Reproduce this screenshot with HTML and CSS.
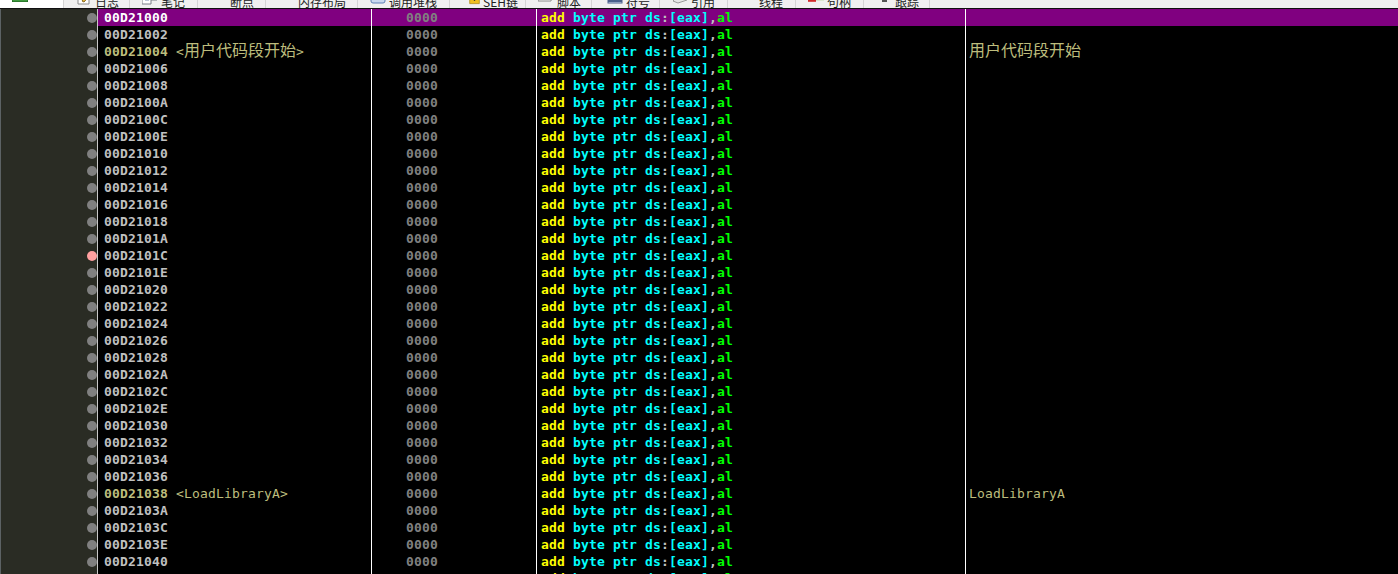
FILE: index.html
```html
<!DOCTYPE html>
<html lang="zh">
<head>
<meta charset="utf-8">
<title>x64dbg</title>
<link rel="stylesheet" href="styles.css">
</head>
<body>
<div class="tabs">
<div class="tab active w63"><svg class="ic low" viewBox="0 0 16 16"><rect x="0" y="0" width="16" height="16" fill="#3f9a3f" stroke="#1d5c1d"/></svg></div>
<div class="tab w66"><svg class="ic" viewBox="0 0 16 16"><path d="M2 0h11v15H2z" fill="#fff" stroke="#8a8a8a"/><path d="M6 12l7-9 2 2-7 8z" fill="#e8b93c" stroke="#8a6a20"/></svg><span>日志</span></div>
<div class="tab w68"><svg class="ic" viewBox="0 0 16 16"><path d="M0 0h15v11H9v4H0z" fill="#fff" stroke="#7a7f88"/><path d="M3 8h9M3 11h4" stroke="#7a8fb0"/></svg><span>笔记</span></div>
<div class="tab w68 center"><span>断点</span></div>
<div class="tab w92 center"><span>内存布局</span></div>
<div class="tab w92"><svg class="ic" viewBox="0 0 16 16"><rect x="1" y="0" width="14" height="14" rx="2" fill="#c9d8f0" stroke="#5d7fb5"/></svg><span>调用堆栈</span></div>
<div class="tab w76"><svg class="ic small" viewBox="0 0 16 16"><path d="M1 0h14v14H1z" fill="#f0c020" stroke="#a88510"/><path d="M8 5v5" stroke="#333" stroke-width="2"/></svg><span>SEH链</span></div>
<div class="tab w66"><svg class="ic" viewBox="0 0 16 16"><path d="M3 0h12l-2 12H0z" fill="#fff" stroke="#8a8a8a"/></svg><span>脚本</span></div>
<div class="tab w68 sym"><svg class="ic" viewBox="0 0 16 16"><rect x="1" y="0" width="14" height="14" fill="#cfdcf0" stroke="#4a5f8a"/><path d="M1 12h14" stroke="#4a5f8a" stroke-width="2"/></svg><span>符号</span></div>
<div class="tab w68"><svg class="ic" viewBox="0 0 16 16"><path d="M1 12l4-4h10v3l-9 3z" fill="#e8e8e8" stroke="#9a9a9a"/></svg><span>引用</span></div>
<div class="tab w68"><svg class="ic" viewBox="0 0 16 16"><path d="M3 0h10v10H3z" fill="#9fb6d6"/><path d="M5 3h6" stroke="#3c5f90"/></svg><span>线程</span></div>
<div class="tab w68"><svg class="ic wide" viewBox="0 0 20 16"><rect x="0" y="3" width="10" height="11" fill="#d02a2a"/><rect x="10" y="1" width="10" height="11" fill="#7ab648"/></svg><span>句柄</span></div>
<div class="tab w66"><svg class="ic" viewBox="0 0 16 16"><path d="M6 0h3v8h2v5H6z" fill="#555"/></svg><span>跟踪</span></div>
</div>
<div class="list">
<div class="row sel"><div class="gut"><i class="dot"></i></div><div class="addr"><b>00D21000</b></div><div class="bytes">0000</div><div class="dis"><em>add</em> <u>byte</u> <u>ptr</u> <u>ds</u><s>:</s><u>[eax]</u><s>,</s><q>al</q></div><div class="cmt"></div></div>
<div class="row"><div class="gut"><i class="dot"></i></div><div class="addr"><b>00D21002</b></div><div class="bytes">0000</div><div class="dis"><em>add</em> <u>byte</u> <u>ptr</u> <u>ds</u><s>:</s><u>[eax]</u><s>,</s><q>al</q></div><div class="cmt"></div></div>
<div class="row lab"><div class="gut"><i class="dot"></i></div><div class="addr"><b>00D21004</b> <span class="tag">&lt;<span class="cjk">用户代码段开始</span>&gt;</span></div><div class="bytes">0000</div><div class="dis"><em>add</em> <u>byte</u> <u>ptr</u> <u>ds</u><s>:</s><u>[eax]</u><s>,</s><q>al</q></div><div class="cmt"><span class="cjk">用户代码段开始</span></div></div>
<div class="row"><div class="gut"><i class="dot"></i></div><div class="addr"><b>00D21006</b></div><div class="bytes">0000</div><div class="dis"><em>add</em> <u>byte</u> <u>ptr</u> <u>ds</u><s>:</s><u>[eax]</u><s>,</s><q>al</q></div><div class="cmt"></div></div>
<div class="row"><div class="gut"><i class="dot"></i></div><div class="addr"><b>00D21008</b></div><div class="bytes">0000</div><div class="dis"><em>add</em> <u>byte</u> <u>ptr</u> <u>ds</u><s>:</s><u>[eax]</u><s>,</s><q>al</q></div><div class="cmt"></div></div>
<div class="row"><div class="gut"><i class="dot"></i></div><div class="addr"><b>00D2100A</b></div><div class="bytes">0000</div><div class="dis"><em>add</em> <u>byte</u> <u>ptr</u> <u>ds</u><s>:</s><u>[eax]</u><s>,</s><q>al</q></div><div class="cmt"></div></div>
<div class="row"><div class="gut"><i class="dot"></i></div><div class="addr"><b>00D2100C</b></div><div class="bytes">0000</div><div class="dis"><em>add</em> <u>byte</u> <u>ptr</u> <u>ds</u><s>:</s><u>[eax]</u><s>,</s><q>al</q></div><div class="cmt"></div></div>
<div class="row"><div class="gut"><i class="dot"></i></div><div class="addr"><b>00D2100E</b></div><div class="bytes">0000</div><div class="dis"><em>add</em> <u>byte</u> <u>ptr</u> <u>ds</u><s>:</s><u>[eax]</u><s>,</s><q>al</q></div><div class="cmt"></div></div>
<div class="row"><div class="gut"><i class="dot"></i></div><div class="addr"><b>00D21010</b></div><div class="bytes">0000</div><div class="dis"><em>add</em> <u>byte</u> <u>ptr</u> <u>ds</u><s>:</s><u>[eax]</u><s>,</s><q>al</q></div><div class="cmt"></div></div>
<div class="row"><div class="gut"><i class="dot"></i></div><div class="addr"><b>00D21012</b></div><div class="bytes">0000</div><div class="dis"><em>add</em> <u>byte</u> <u>ptr</u> <u>ds</u><s>:</s><u>[eax]</u><s>,</s><q>al</q></div><div class="cmt"></div></div>
<div class="row"><div class="gut"><i class="dot"></i></div><div class="addr"><b>00D21014</b></div><div class="bytes">0000</div><div class="dis"><em>add</em> <u>byte</u> <u>ptr</u> <u>ds</u><s>:</s><u>[eax]</u><s>,</s><q>al</q></div><div class="cmt"></div></div>
<div class="row"><div class="gut"><i class="dot"></i></div><div class="addr"><b>00D21016</b></div><div class="bytes">0000</div><div class="dis"><em>add</em> <u>byte</u> <u>ptr</u> <u>ds</u><s>:</s><u>[eax]</u><s>,</s><q>al</q></div><div class="cmt"></div></div>
<div class="row"><div class="gut"><i class="dot"></i></div><div class="addr"><b>00D21018</b></div><div class="bytes">0000</div><div class="dis"><em>add</em> <u>byte</u> <u>ptr</u> <u>ds</u><s>:</s><u>[eax]</u><s>,</s><q>al</q></div><div class="cmt"></div></div>
<div class="row"><div class="gut"><i class="dot"></i></div><div class="addr"><b>00D2101A</b></div><div class="bytes">0000</div><div class="dis"><em>add</em> <u>byte</u> <u>ptr</u> <u>ds</u><s>:</s><u>[eax]</u><s>,</s><q>al</q></div><div class="cmt"></div></div>
<div class="row"><div class="gut"><i class="dot bp"></i></div><div class="addr"><b>00D2101C</b></div><div class="bytes">0000</div><div class="dis"><em>add</em> <u>byte</u> <u>ptr</u> <u>ds</u><s>:</s><u>[eax]</u><s>,</s><q>al</q></div><div class="cmt"></div></div>
<div class="row"><div class="gut"><i class="dot"></i></div><div class="addr"><b>00D2101E</b></div><div class="bytes">0000</div><div class="dis"><em>add</em> <u>byte</u> <u>ptr</u> <u>ds</u><s>:</s><u>[eax]</u><s>,</s><q>al</q></div><div class="cmt"></div></div>
<div class="row"><div class="gut"><i class="dot"></i></div><div class="addr"><b>00D21020</b></div><div class="bytes">0000</div><div class="dis"><em>add</em> <u>byte</u> <u>ptr</u> <u>ds</u><s>:</s><u>[eax]</u><s>,</s><q>al</q></div><div class="cmt"></div></div>
<div class="row"><div class="gut"><i class="dot"></i></div><div class="addr"><b>00D21022</b></div><div class="bytes">0000</div><div class="dis"><em>add</em> <u>byte</u> <u>ptr</u> <u>ds</u><s>:</s><u>[eax]</u><s>,</s><q>al</q></div><div class="cmt"></div></div>
<div class="row"><div class="gut"><i class="dot"></i></div><div class="addr"><b>00D21024</b></div><div class="bytes">0000</div><div class="dis"><em>add</em> <u>byte</u> <u>ptr</u> <u>ds</u><s>:</s><u>[eax]</u><s>,</s><q>al</q></div><div class="cmt"></div></div>
<div class="row"><div class="gut"><i class="dot"></i></div><div class="addr"><b>00D21026</b></div><div class="bytes">0000</div><div class="dis"><em>add</em> <u>byte</u> <u>ptr</u> <u>ds</u><s>:</s><u>[eax]</u><s>,</s><q>al</q></div><div class="cmt"></div></div>
<div class="row"><div class="gut"><i class="dot"></i></div><div class="addr"><b>00D21028</b></div><div class="bytes">0000</div><div class="dis"><em>add</em> <u>byte</u> <u>ptr</u> <u>ds</u><s>:</s><u>[eax]</u><s>,</s><q>al</q></div><div class="cmt"></div></div>
<div class="row"><div class="gut"><i class="dot"></i></div><div class="addr"><b>00D2102A</b></div><div class="bytes">0000</div><div class="dis"><em>add</em> <u>byte</u> <u>ptr</u> <u>ds</u><s>:</s><u>[eax]</u><s>,</s><q>al</q></div><div class="cmt"></div></div>
<div class="row"><div class="gut"><i class="dot"></i></div><div class="addr"><b>00D2102C</b></div><div class="bytes">0000</div><div class="dis"><em>add</em> <u>byte</u> <u>ptr</u> <u>ds</u><s>:</s><u>[eax]</u><s>,</s><q>al</q></div><div class="cmt"></div></div>
<div class="row"><div class="gut"><i class="dot"></i></div><div class="addr"><b>00D2102E</b></div><div class="bytes">0000</div><div class="dis"><em>add</em> <u>byte</u> <u>ptr</u> <u>ds</u><s>:</s><u>[eax]</u><s>,</s><q>al</q></div><div class="cmt"></div></div>
<div class="row"><div class="gut"><i class="dot"></i></div><div class="addr"><b>00D21030</b></div><div class="bytes">0000</div><div class="dis"><em>add</em> <u>byte</u> <u>ptr</u> <u>ds</u><s>:</s><u>[eax]</u><s>,</s><q>al</q></div><div class="cmt"></div></div>
<div class="row"><div class="gut"><i class="dot"></i></div><div class="addr"><b>00D21032</b></div><div class="bytes">0000</div><div class="dis"><em>add</em> <u>byte</u> <u>ptr</u> <u>ds</u><s>:</s><u>[eax]</u><s>,</s><q>al</q></div><div class="cmt"></div></div>
<div class="row"><div class="gut"><i class="dot"></i></div><div class="addr"><b>00D21034</b></div><div class="bytes">0000</div><div class="dis"><em>add</em> <u>byte</u> <u>ptr</u> <u>ds</u><s>:</s><u>[eax]</u><s>,</s><q>al</q></div><div class="cmt"></div></div>
<div class="row"><div class="gut"><i class="dot"></i></div><div class="addr"><b>00D21036</b></div><div class="bytes">0000</div><div class="dis"><em>add</em> <u>byte</u> <u>ptr</u> <u>ds</u><s>:</s><u>[eax]</u><s>,</s><q>al</q></div><div class="cmt"></div></div>
<div class="row lab"><div class="gut"><i class="dot"></i></div><div class="addr"><b>00D21038</b> <span class="tag">&lt;LoadLibraryA&gt;</span></div><div class="bytes">0000</div><div class="dis"><em>add</em> <u>byte</u> <u>ptr</u> <u>ds</u><s>:</s><u>[eax]</u><s>,</s><q>al</q></div><div class="cmt">LoadLibraryA</div></div>
<div class="row"><div class="gut"><i class="dot"></i></div><div class="addr"><b>00D2103A</b></div><div class="bytes">0000</div><div class="dis"><em>add</em> <u>byte</u> <u>ptr</u> <u>ds</u><s>:</s><u>[eax]</u><s>,</s><q>al</q></div><div class="cmt"></div></div>
<div class="row"><div class="gut"><i class="dot"></i></div><div class="addr"><b>00D2103C</b></div><div class="bytes">0000</div><div class="dis"><em>add</em> <u>byte</u> <u>ptr</u> <u>ds</u><s>:</s><u>[eax]</u><s>,</s><q>al</q></div><div class="cmt"></div></div>
<div class="row"><div class="gut"><i class="dot"></i></div><div class="addr"><b>00D2103E</b></div><div class="bytes">0000</div><div class="dis"><em>add</em> <u>byte</u> <u>ptr</u> <u>ds</u><s>:</s><u>[eax]</u><s>,</s><q>al</q></div><div class="cmt"></div></div>
<div class="row"><div class="gut"><i class="dot"></i></div><div class="addr"><b>00D21040</b></div><div class="bytes">0000</div><div class="dis"><em>add</em> <u>byte</u> <u>ptr</u> <u>ds</u><s>:</s><u>[eax]</u><s>,</s><q>al</q></div><div class="cmt"></div></div>
<div class="row"><div class="gut"><i class="dot"></i></div><div class="addr"></div><div class="bytes">0000</div><div class="dis"><em>add</em> <u>byte</u> <u>ptr</u> <u>ds</u><s>:</s><u>[eax]</u><s>,</s><q>al</q></div><div class="cmt"></div></div>
</div>
</body>
</html>
```

FILE: styles.css
```css
html, body {
  margin: 0;
  padding: 0;
  height: 574px;
  overflow: hidden;
  background: #000;
}
.tabs {
  display: flex;
  height: 8px;
  background: #f0f0f0;
  border-bottom: 1px solid #111;
  overflow: hidden;
  font-family: "Noto Sans CJK SC", sans-serif;
  font-size: 12px;
  color: #222;
}
.tab {
  box-sizing: border-box;
  height: 8px;
  display: flex;
  align-items: flex-end;
  gap: 3px;
  padding-left: 12px;
  border-right: 1px solid #d4d4d4;
  overflow: hidden;
  line-height: 1;
  flex: none;
}
.tab span { flex: none; }
.tab.center { padding-left: 32px; }
.tab.sym { padding-left: 15px; }
.active { background: #fff; }
.w63 { width: 64px; }
.w66 { width: 66px; }
.w68 { width: 68px; }
.w76 { width: 76px; }
.w92 { width: 92px; }
.ic { width: 16px; height: 16px; flex: none; margin-bottom: 3px; }
.low { margin-bottom: 6px; }
.small { width: 11px; height: 11px; margin-left: 7px; margin-bottom: 3px; }
.wide { width: 16px; margin-bottom: 3px; }
.list {
  font-family: "DejaVu Sans Mono", "Noto Sans CJK SC", monospace;
  font-size: 13px;
  letter-spacing: 0.17px;
  line-height: 17px;
  color: #c0c0c0;
}
.row {
  display: flex;
  height: 17px;
  white-space: pre;
}
.gut {
  box-sizing: border-box;
  width: 98px;
  flex: none;
  display: flex;
  align-items: center;
  justify-content: flex-end;
  background: #2a2c24;
  border-left: 1px solid #5c6264;
  border-right: 1px solid #c8c8c8;
}
.dot {
  width: 10px;
  height: 10px;
  border-radius: 50%;
  background: #808080;
}
.bp { background: #ffa0a0; }
.addr, .bytes, .dis, .cmt {
  box-sizing: border-box;
  flex: none;
  overflow: hidden;
  height: 17px;
}
.addr {
  width: 274px;
  padding-left: 6px;
  border-right: 1px solid #fff;
}
.addr b { font-weight: bold; }
.bytes {
  width: 165px;
  padding-left: 34px;
  font-weight: bold;
  color: #808080;
  border-right: 1px solid #fff;
}
.dis {
  width: 429px;
  padding-left: 4px;
  border-right: 1px solid #fff;
  font-weight: bold;
}
.cmt {
  width: 432px;
  padding-left: 3px;
  color: #bdbd7d;
}
.dis em { font-style: normal; color: #ffff00; }
.dis u { text-decoration: none; color: #00ffff; }
.dis s { text-decoration: none; color: #c0c0c0; }
.dis q { quotes: none; color: #00ff00; }
.sel .addr, .sel .bytes, .sel .dis, .sel .cmt { background: #800080; }
.sel .addr b { color: #fff; }
.lab .addr b { color: #bdbd7d; }
.tag { color: #bdbd7d; font-weight: normal; }
.cjk {
  font-family: "Noto Sans CJK SC", sans-serif;
  font-size: 16px;
  line-height: 0;
  letter-spacing: 0;
  font-weight: normal;
}
```
